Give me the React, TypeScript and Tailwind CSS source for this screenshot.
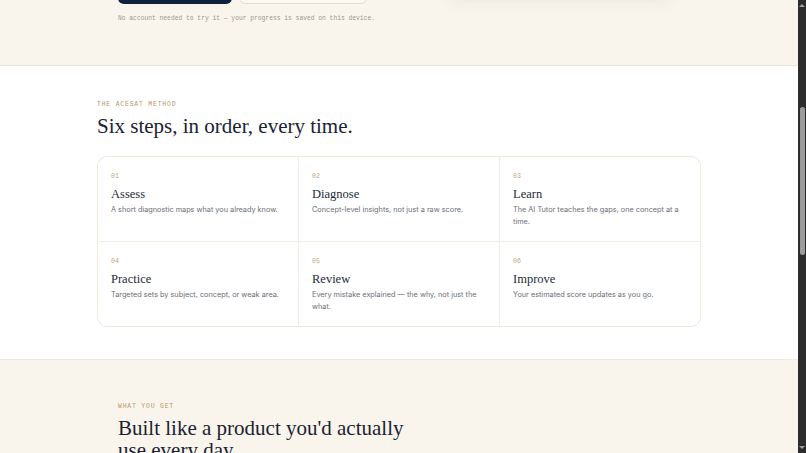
const steps = [
  { n: "01", title: "Assess", body: "A short diagnostic maps what you already know." },
  { n: "02", title: "Diagnose", body: "Concept-level insights, not just a raw score." },
  { n: "03", title: "Learn", body: "The AI Tutor teaches the gaps, one concept at a time." },
  { n: "04", title: "Practice", body: "Targeted sets by subject, concept, or weak area." },
  { n: "05", title: "Review", body: "Every mistake explained — the why, not just the what." },
  { n: "06", title: "Improve", body: "Your estimated score updates as you go." },
];

const serif = "font-['Liberation_Serif',serif]";
const mono = "font-['Liberation_Mono',monospace]";
const sans = "font-['Inter',sans-serif]";

function Hero() {
  return (
    <section className="h-[66px] bg-[#f9f5ec] border-b border-[#ebe5d9]">
      <div className="mx-auto w-[562px] flex justify-between">
        <div>
          <div className="-mt-[36px] flex gap-[7px]">
            <button className="h-[40px] w-[114px] rounded-[6px] bg-[#10203f]" />
            <button className="h-[40px] w-[128px] rounded-[6px] border border-[#e6dccb] bg-[#fbf8f1]" />
          </div>
          <p className={`mt-[11px] text-[6.3px] leading-[8px] text-[#9b9890] ${mono}`}>
            No account needed to try it — your progress is saved on this device.
          </p>
        </div>
        <div className="-mt-[200px] mr-[5px] h-[196px] w-[230px] rounded-[12px] bg-[#fbf9f4] shadow-[0_4px_16px_rgba(60,50,30,0.08)]" />
      </div>
    </section>
  );
}

function Method() {
  return (
    <section className="bg-white border-b border-[#f0ebe1] pt-[35px] pb-[32px]">
      <div className="mx-auto w-[604px]">
        <p className={`text-[6.4px] leading-[8px] tracking-[0.13em] text-[#b8956a] ${mono}`}>
          THE ACESAT METHOD
        </p>
        <h2 className={`mt-[4px] text-[21px] leading-[26px] text-[#1b2233] ${serif}`}>
          Six steps, in order, every time.
        </h2>
        <div className="mt-[17px] grid grid-cols-3 gap-px overflow-hidden rounded-[10px] border border-[#efe9de] bg-[#f1ece2]">
          {steps.map((s) => (
            <div key={s.n} className="h-[84px] bg-white px-[13px] pt-[16px]">
              <p className={`text-[6.6px] leading-[8px] text-[#c4a57c] ${mono}`}>{s.n}</p>
              <h3 className={`mt-[5px] text-[12.5px] leading-[16px] text-[#252b3a] ${serif}`}>{s.title}</h3>
              <p className={`mt-[2px] text-[7.3px] leading-[11.5px] text-[#6b6e75] ${sans}`}>{s.body}</p>
            </div>
          ))}
        </div>
      </div>
    </section>
  );
}

function Features() {
  return (
    <section className="bg-[#f9f5ec] pt-[43px] pb-[40px]">
      <div className="mx-auto w-[562px]">
        <p className={`text-[6.4px] leading-[8px] tracking-[0.13em] text-[#b8956a] ${mono}`}>
          WHAT YOU GET
        </p>
        <h2 className={`mt-[6px] w-[300px] text-[21px] leading-[22px] text-[#1b2233] ${serif}`}>
          Built like a product you'd actually use every day.
        </h2>
      </div>
    </section>
  );
}

export default function App() {
  return (
    <div className="flex h-[453px] w-[806px] overflow-hidden">
      <main className="flex-1 min-w-0">
        <Hero />
        <Method />
        <Features />
      </main>
      {/* page scrollbar */}
      <div className="flex w-[8px] flex-col items-center bg-[#2c2c2c]">
        <div className="mt-[4px] h-0 w-0 border-x-[3px] border-b-[3px] border-x-transparent border-b-[#a0a0a0]" />
        <div className="mt-[100px] h-[148px] w-[5px] rounded-full bg-[#9c9c9c]" />
        <div className="mt-auto mb-[4px] h-0 w-0 border-x-[3px] border-t-[3px] border-x-transparent border-t-[#a0a0a0]" />
      </div>
    </div>
  );
}
